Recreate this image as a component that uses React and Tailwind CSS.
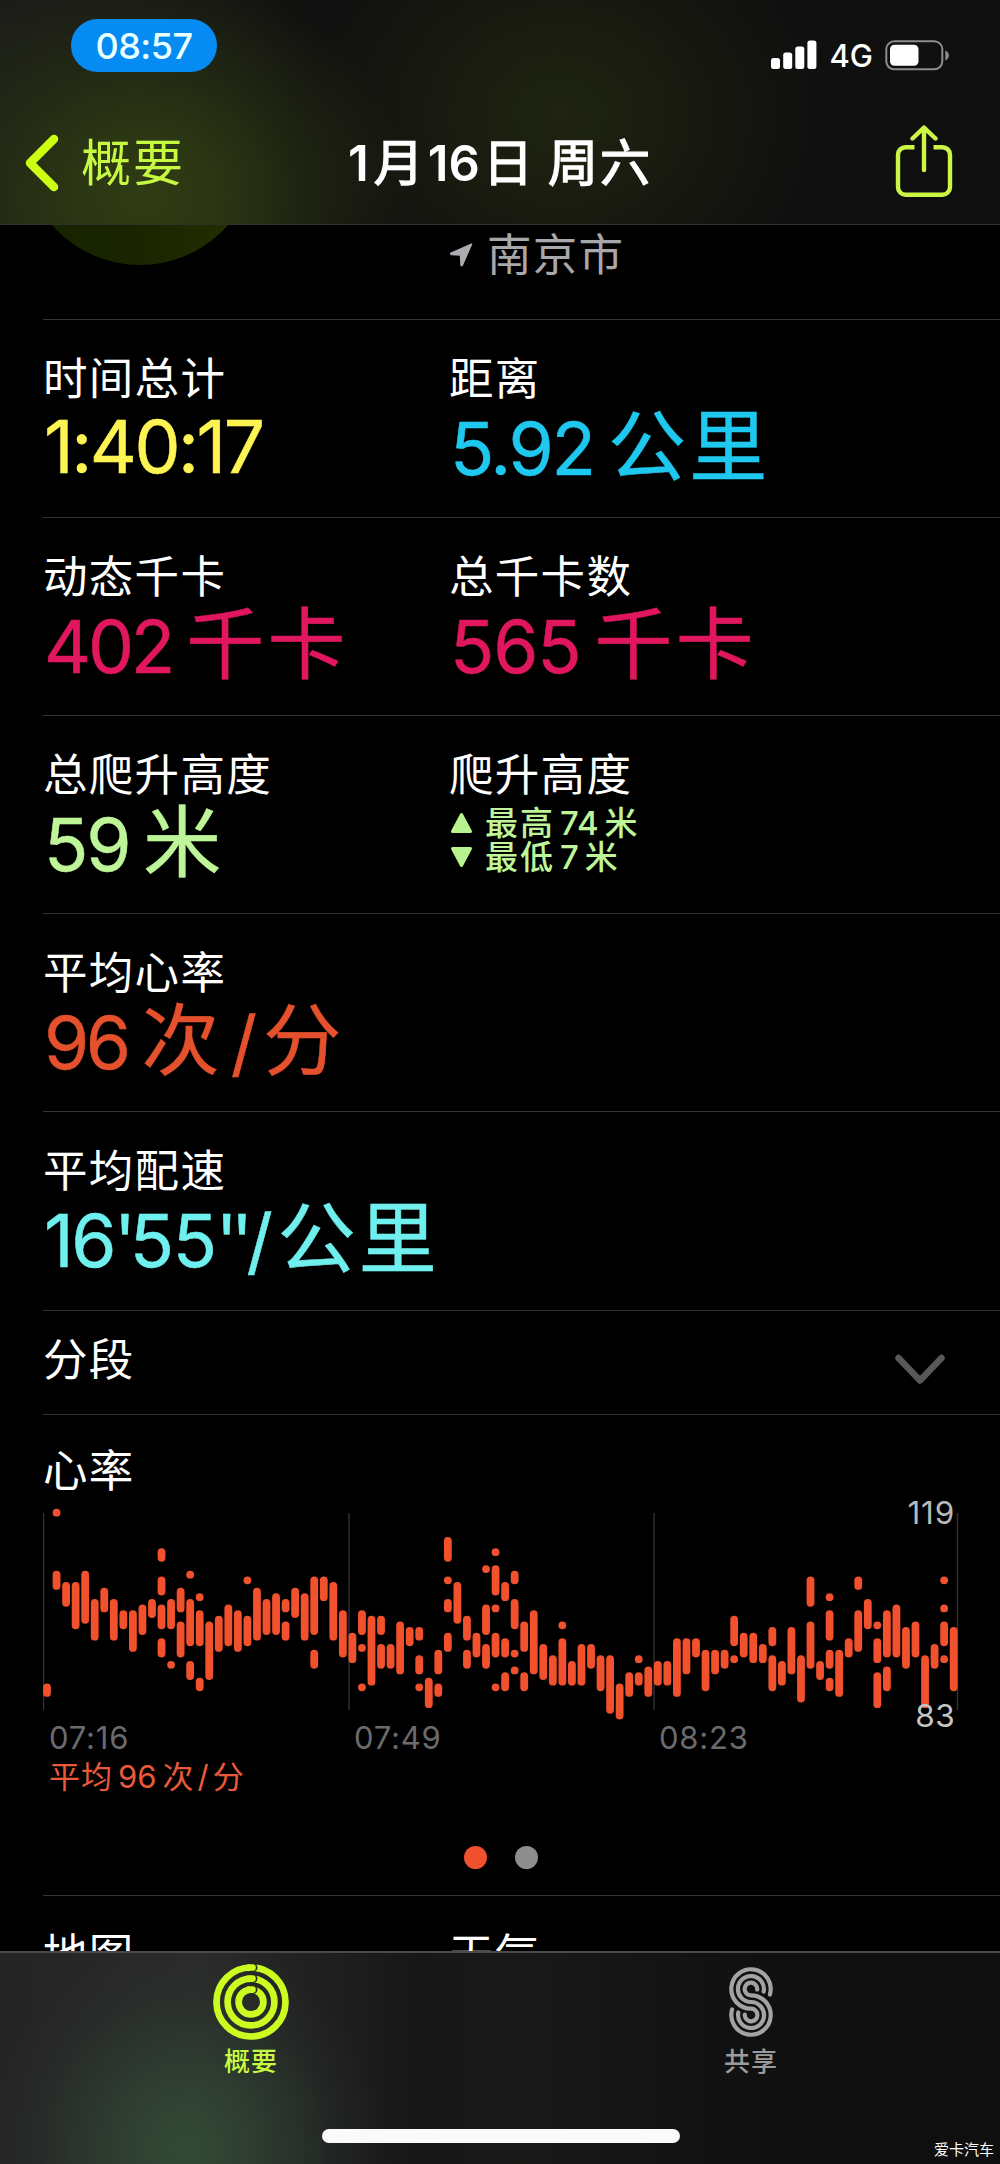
import React from 'react';

const FONT = "font-['Inter','Noto_Sans_CJK_SC',sans-serif]";

// Heart rate ranges per bucket, in bpm: [high, low]
const HEART_RATE = [
  [[88, 87]],
  [[119, 119], [108, 106]],
  [[106, 103]],
  [[106, 99]],
  [[108, 100]],
  [[103, 97]],
  [[105, 102]],
  [[103, 97]],
  [[101, 99]],
  [[101, 95]],
  [[102, 98]],
  [[103, 101]],
  [[112, 111], [107, 105], [102, 99], [96, 94]],
  [[103, 99], [92, 92]],
  [[105, 102], [99, 94]],
  [[108, 108], [103, 96], [92, 90]],
  [[104, 104], [101, 96], [89, 88]],
  [[99, 90]],
  [[100, 95]],
  [[102, 96]],
  [[101, 95]],
  [[107, 107], [100, 96]],
  [[105, 97]],
  [[103, 98]],
  [[104, 98]],
  [[103, 102], [99, 97]],
  [[105, 101]],
  [[104, 97]],
  [[107, 98], [94, 92]],
  [[107, 104]],
  [[106, 97]],
  [[101, 94]],
  [[97, 93]],
  [[101, 98], [95, 95], [88, 88]],
  [[100, 89]],
  [[100, 98], [95, 92]],
  [[95, 92]],
  [[99, 91]],
  [[98, 96]],
  [[98, 97], [93, 91], [88, 88]],
  [[89, 85]],
  [[94, 91], [88, 87]],
  [[114, 111], [107, 107], [103, 102], [97, 95]],
  [[106, 100]],
  [[100, 97], [94, 92]],
  [[97, 94]],
  [[109, 109], [102, 98], [95, 92]],
  [[112, 112], [109, 105], [102, 102], [97, 94], [88, 88]],
  [[106, 104], [96, 94], [90, 88]],
  [[108, 107], [103, 99], [94, 94], [91, 91]],
  [[99, 95], [90, 88]],
  [[101, 91]],
  [[95, 90]],
  [[93, 89]],
  [[99, 99], [96, 89]],
  [[92, 89]],
  [[95, 89]],
  [[95, 92]],
  [[93, 88]],
  [[93, 84]],
  [[88, 83]],
  [[90, 87]],
  [[93, 93], [90, 89]],
  [[91, 87]],
  [[92, 89]],
  [[92, 89]],
  [[96, 87]],
  [[96, 91]],
  [[96, 94]],
  [[94, 88]],
  [[94, 91]],
  [[94, 92]],
  [[100, 96], [93, 93]],
  [[97, 94]],
  [[97, 93]],
  [[95, 93]],
  [[98, 96], [93, 88]],
  [[92, 89]],
  [[98, 91]],
  [[93, 86]],
  [[107, 103], [99, 92]],
  [[92, 90]],
  [[104, 104], [101, 97], [94, 92], [89, 88]],
  [[94, 87]],
  [[96, 94]],
  [[107, 106], [101, 95]],
  [[103, 99]],
  [[99, 99], [96, 93], [90, 85]],
  [[101, 94], [91, 88]],
  [[102, 94]],
  [[98, 92]],
  [[99, 94]],
  [[93, 85]],
  [[95, 92]],
  [[107, 107], [102, 102], [99, 96], [93, 93]],
  [[98, 88]],
];

const MAX_BPM = 119;
const BPM_HEIGHT = 5.633;
const BUCKET_WIDTH = 9.544;
const BAR_WIDTH = 7.8;

const GRID = [
  { x: 0.5, label: '07:16', labelX: 6 },
  { x: 306, label: '07:49', labelX: 311 },
  { x: 611, label: '08:23', labelX: 616 },
  { x: 914.5 },
];

const HeartRateChart = () => (
  <svg width="957" height="259" viewBox="0 0 957 259" className={`block ${FONT}`}>
    {GRID.map(({ x, label, labelX }) => (
      <g key={x}>
        <line x1={x} x2={x} y1="13" y2="210" stroke="#333335" strokeWidth="1.4" />
        {label && (
          <text x={labelX} y="249" fontSize="31" letterSpacing="0.8" fill="#6b6b6e">{label}</text>
        )}
      </g>
    ))}
    {HEART_RATE.map((ranges, i) =>
      ranges.map(([high, low]) => (
        <rect
          key={`${i}-${high}`}
          x={4 + i * BUCKET_WIDTH - BAR_WIDTH / 2}
          y={12.7 + (MAX_BPM - high) * BPM_HEIGHT - BAR_WIDTH / 2}
          width={BAR_WIDTH}
          height={(high - low) * BPM_HEIGHT + BAR_WIDTH}
          rx={BAR_WIDTH / 2}
          fill="#f2512d"
        />
      ))
    )}
    <text x="912" y="23.5" fontSize="31.5" letterSpacing="0.8" textAnchor="end" fill="#b9b9bb">119</text>
    <text x="912" y="227" fontSize="31.5" letterSpacing="0.4" textAnchor="end" fill="#c4c4c6">83</text>
  </svg>
);

const SignalIcon = () => (
  <svg width="46" height="30" viewBox="0 0 46 30" fill="#fff">
    <rect x="0" y="18" width="9" height="11" rx="2.5" />
    <rect x="12.2" y="12.5" width="9" height="16.5" rx="2.5" />
    <rect x="24.3" y="6.5" width="9" height="22.5" rx="2.5" />
    <rect x="36.4" y="0.5" width="9" height="28.5" rx="2.5" />
  </svg>
);

const BatteryIcon = () => (
  <svg width="65" height="31" viewBox="0 0 65 31">
    <rect x="1.3" y="1.3" width="56" height="28" rx="8" fill="none" stroke="#8d8d8a" strokeWidth="2" />
    <rect x="5" y="4.8" width="28.5" height="21" rx="4.5" fill="#fff" />
    <path d="M60.3 10.5c2.2.8 3.6 2.7 3.6 5s-1.4 4.2-3.6 5z" fill="#8d8d8a" />
  </svg>
);

const ShareIcon = () => (
  <svg width="58" height="72" viewBox="0 0 58 72" fill="none" stroke="#cdf545" strokeWidth="4.4">
    <path d="M19.5 22.2H10.5a7.5 7.5 0 0 0-7.5 7.5v32.5a7.5 7.5 0 0 0 7.5 7.5h37a7.5 7.5 0 0 0 7.5-7.5V29.7a7.5 7.5 0 0 0-7.5-7.5H38.5" />
    <path d="M29 45V3.5M17.5 13.5L29 2.6l11.5 10.9" strokeLinecap="round" strokeLinejoin="round" />
  </svg>
);

const LocationIcon = () => (
  <svg width="23" height="24" viewBox="0 0 23 24" fill="#acacb0" stroke="#acacb0" strokeWidth="1.5" strokeLinejoin="round">
    <path d="M21.5 1.3L1 10.2c-.6.4-.4 1.2.3 1.3l9.2.5.5 9.8c.1.8 1 1 1.3.3z" />
  </svg>
);

const RingsIcon = () => (
  <svg width="78" height="78" viewBox="-39 -39 78 78" fill="none" strokeWidth="6.7">
    {[34.5, 23.4, 12.4].map((r) => (
      <g key={r}>
        <circle r={r} stroke="#ccfb22" />
        {/* gap behind the rounded ring head */}
        <path d={`M0 ${-r}h2.2`} stroke="#24300f" strokeWidth="8.6" strokeLinecap="round" />
        <path d={`M-1.5 ${-r}h3`} stroke="#ccfb22" strokeLinecap="round" />
        <path d={`M-4 ${-r + 0.2}h3`} stroke="#ccfb22" />
      </g>
    ))}
  </svg>
);

const SharingIcon = () => (
  <svg width="44" height="70" viewBox="-22 -35 44 70" fill="none" stroke="#a3a3a3" strokeWidth="4.2" strokeLinecap="round">
    <path d="M18.9 -7.5A19.7 19.7 0 1 0 0 6.7A6.3 6.3 0 1 1 -6.2 12.5" />
    <path d="M12.7 -10.5A13 13 0 1 0 0 0A13 13 0 1 1 -12.7 10.5" />
    <path d="M6.2 -12.5A6.3 6.3 0 1 0 0 -6.7A19.7 19.7 0 1 1 -18.9 7.5" />
  </svg>
);

const Label = ({ children }) => (
  <div className="text-[44.5px] leading-[58px] tracking-[1.3px] text-white whitespace-nowrap">{children}</div>
);

const Num = ({ children, className = 'tracking-[-2.2px]' }) => (
  <span className={`text-[73px] ${className}`}>{children}</span>
);

const Unit = ({ children, className = 'ml-[14px]' }) => (
  <span className={`text-[78px] tracking-[3.3px] ${className}`}>{children}</span>
);

const Metric = ({ label, color, children }) => (
  <div>
    <Label>{label}</Label>
    <div className={`-mt-[5px] ml-[1px] flex items-baseline h-[90px] leading-[88px] whitespace-nowrap [-webkit-text-stroke:0.5px] ${color}`}>{children}</div>
  </div>
);

const Row = ({ children, className = 'h-[198px]' }) => (
  <div className={`grid grid-cols-[406px_1fr] border-b border-[#343436] pt-[30px] ${className}`}>
    {children}
  </div>
);

const Elevation = ({ up, text, value }) => (
  <div className="flex items-center h-[34px] text-[33px] font-medium leading-[34px] whitespace-nowrap">
    <svg width="23" height="22" viewBox="0 0 23 22" fill="#b8f58f" stroke="#b8f58f" strokeWidth="3" strokeLinejoin="round">
      <path d={up ? 'M11.5 2.5L20.5 19.5H2.5z' : 'M11.5 19.5L20.5 2.5H2.5z'} />
    </svg>
    <span className="ml-[12px] tracking-[2px]">{text}</span>
    <span className="ml-[5px]">{value}</span>
    <span className="ml-[6px]">米</span>
  </div>
);

const Header = () => (
  <header className="h-[225px] shrink-0 border-b border-[#30312b] bg-[#111110] bg-[radial-gradient(ellipse_260px_230px_at_145px_195px,#303c14_0%,#2c3713_25%,#2c371380_60%,transparent_100%),radial-gradient(ellipse_260px_220px_at_560px_115px,#1f2410_0%,#1f241080_50%,transparent_100%),linear-gradient(90deg,#1b1c19,#111110_30%,#0f0f0f)]">
    <div className="flex h-[92px] pl-[71px] pr-[50px] pt-[19px] justify-between">
      <div className="flex w-[146px] h-[53px] items-center justify-center rounded-full bg-[#058bf2] text-[36px] font-medium tracking-[-0.5px] text-[#eaffff]">08:57</div>
      <div className="flex h-[30px] mt-[21px] items-center text-white">
        <SignalIcon />
        <span className="ml-[12px] mt-[2px] mr-[12px] text-[31px] font-medium">4G</span>
        <BatteryIcon />
      </div>
    </div>
    <div className="grid grid-cols-[1fr_auto_1fr] items-center h-[144px] -mt-[1px] px-[24px] pb-[1px]">
      <div className="flex items-center">
        <svg width="36" height="58" viewBox="0 0 36 58" fill="none" stroke="#ccff12" strokeWidth="8.5" strokeLinecap="round" strokeLinejoin="round">
          <path d="M30 5L6 29l24 24" />
        </svg>
        <span className="ml-[21px] mt-[2px] text-[50px] tracking-[2px] text-[#c6f941]">概要</span>
      </div>
      <h1 className="mt-[2px] flex items-baseline text-[50px] text-white whitespace-nowrap [-webkit-text-stroke:1.4px_#fff]">
        <span className="text-[49px] font-semibold [-webkit-text-stroke:0]">1</span>
        <span className="ml-[5px]">月</span>
        <span className="ml-[4px] text-[49px] font-semibold [-webkit-text-stroke:0]">16</span>
        <span className="ml-[3px]">日</span>
        <span className="ml-[15px] tracking-[2px]">周六</span>
      </h1>
      <div className="-mt-[4px] mr-[23px] flex justify-end">
        <ShareIcon />
      </div>
    </div>
  </header>
);

const Tab = ({ icon, label, color }) => (
  <div className={`flex w-[500px] flex-col items-center pl-[2px] ${color}`}>
    <div className="flex h-[78px] mt-[10px] items-center">{icon}</div>
    <span className="mt-[3px] text-[26px] font-medium leading-[36px] tracking-[1px]">{label}</span>
  </div>
);

const TabBar = () => (
  <footer className="relative h-[213px] shrink-0 border-t-2 border-[#4a4a4a] bg-[#111] bg-[radial-gradient(ellipse_200px_210px_at_185px_195px,#334b36_0%,#30443499_45%,#2c382f44_75%,transparent_100%),linear-gradient(90deg,#242424,#2a2a2a_20%,#171717_42%,#191918_52%,#0f0f0f_80%)]">
    <div className="flex">
      <Tab icon={<RingsIcon />} label="概要" color="text-[#c6f941]" />
      <Tab icon={<SharingIcon />} label="共享" color="text-[#9b9b9b]" />
    </div>
    <div className="ml-[322px] mt-[49px] h-[14px] w-[358px] rounded-full bg-[#fafafa]" />
    <span className="absolute right-[6px] bottom-[4px] text-[15px] leading-[20px] text-white">爱卡汽车</span>
  </footer>
);

export default function App() {
  return (
    <div className={`flex h-[2164px] w-[1000px] flex-col overflow-hidden bg-black ${FONT}`}>
      <Header />

      <main className="min-h-0 flex-1 overflow-hidden pl-[43px]">
        <div className="grid h-[95px] grid-cols-[407px_1fr] overflow-hidden border-b border-[#343436]">
          <div className="-mt-[194px] ml-[-20px] h-[234px] w-[234px] rounded-full bg-[linear-gradient(90deg,#172300,#1a2500_50%,#243100)]" />
          <div className="flex h-[60px] items-center">
            <LocationIcon />
            <span className="ml-[14px] text-[44.5px] leading-[60px] tracking-[1.3px] text-[#a8a8ac]">南京市</span>
          </div>
        </div>

        <Row>
          <Metric label="时间总计" color="text-[#fdf453]"><Num className="tracking-[-2.5px]">1:40:17</Num></Metric>
          <Metric label="距离" color="text-[#1fc8ef]"><Num>5.92</Num><Unit>公里</Unit></Metric>
        </Row>
        <Row>
          <Metric label="动态千卡" color="text-[#e0175f]"><Num className="tracking-[-3.2px]">402</Num><Unit>千卡</Unit></Metric>
          <Metric label="总千卡数" color="text-[#e0175f]"><Num className="tracking-[-1.2px]">565</Num><Unit>千卡</Unit></Metric>
        </Row>
        <Row>
          <Metric label="总爬升高度" color="text-[#bdf598]"><Num>59</Num><Unit>米</Unit></Metric>
          <div className="text-[#bdf598]">
            <Label>爬升高度</Label>
            <div className="ml-[1px] mt-[2px]">
              <Elevation up text="最高" value="74" />
              <Elevation text="最低" value="7" />
            </div>
          </div>
        </Row>
        <Row>
          <Metric label="平均心率" color="text-[#e5502d]">
            <Num className="tracking-[-3.5px]">96</Num><Unit>次</Unit>
            <Num className="ml-[8px]">/</Num><Unit className="ml-[6px]">分</Unit>
          </Metric>
        </Row>
        <Row className="h-[199px]">
          <Metric label="平均配速" color="text-[#6ff0ee]">
            <Num className="tracking-[-2.5px]">16</Num>
            <Num className="tracking-[-6px]">'</Num>
            <Num className="tracking-[-1.5px]">55</Num>
            <Num className="tracking-[-6.5px]">''</Num>
            <Num>/</Num>
            <Unit className="ml-[7px]">公里</Unit>
          </Metric>
        </Row>

        <div className="flex h-[104px] items-center justify-between border-b border-[#343436] pb-[5px] pr-[54px]">
          <Label>分段</Label>
          <svg width="52" height="31" viewBox="0 0 52 31" className="mt-[18px]" fill="none" stroke="#58585a" strokeWidth="6.5" strokeLinecap="round" strokeLinejoin="round">
            <path d="M4.5 4L26 26.5 47.5 4" />
          </svg>
        </div>

        <section className="h-[481px] border-b border-[#343436] pt-[27px]">
          <Label>心率</Label>
          <HeartRateChart />
          <div className="ml-[6px] flex items-baseline text-[31px] leading-[36px] text-[#ea5a3a]">
            <span className="tracking-[1px]">平均</span>
            <span className="ml-[5px]">96</span>
            <span className="ml-[6px]">次</span>
            <span className="ml-[4px]">/</span>
            <span className="ml-[4px]">分</span>
          </div>
          <div className="mt-[51px] ml-[421px] flex gap-[28px]">
            <span className="h-[23px] w-[23px] rounded-full bg-[#f2512d]" />
            <span className="h-[23px] w-[23px] rounded-full bg-[#8e8e90]" />
          </div>
        </section>

        <Row>
          <Label>地图</Label>
          <Label>天气</Label>
        </Row>
      </main>

      <TabBar />
    </div>
  );
}
